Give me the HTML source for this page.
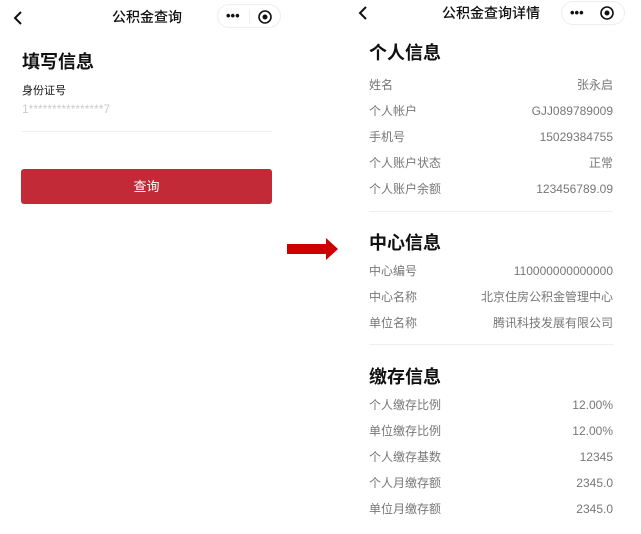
<!DOCTYPE html><html><head><meta charset="utf-8"><style>
*{margin:0;padding:0;box-sizing:border-box}
body{width:641px;height:534px;background:#fff;position:relative;overflow:hidden;font-family:"Liberation Sans","Noto Sans CJK SC",sans-serif;color:#111}
.a{position:absolute;white-space:nowrap}
.t{font-size:14px;font-weight:500;transform:translateX(-50%);line-height:20px}
.cap{position:absolute;height:24px;width:64px;border:1px solid #eee;border-radius:12px}
.h{font-size:18px;font-weight:bold;line-height:24px}
.l,.v{font-size:12px;color:#777;line-height:16px}
.l{left:369px}
.v{right:28px}
.hr{position:absolute;height:1px;background:#eee}
</style></head><body>
<svg class="a" style="left:10px;top:9px" width="16" height="18"><path d="M11 3 L5 9 L11 15" stroke="#111" stroke-width="2" fill="none"/></svg>
<div class="a t" style="left:147px;top:7px">公积金查询</div>
<div class="cap" style="left:217px;top:4px"></div>
<div class="a" style="left:226px;top:8px;font-size:13px;font-weight:bold">•••</div>
<div class="a" style="left:249px;top:9px;width:1px;height:15px;background:#eee"></div>
<svg class="a" style="left:257px;top:9px" width="16" height="16"><circle cx="8" cy="8" r="6" stroke="#111" stroke-width="1.6" fill="none"/><circle cx="8" cy="8" r="2.5" fill="#111"/></svg>
<div class="a h" style="left:22px;top:50px">填写信息</div>
<div class="a" style="left:22px;top:84px;font-size:11px;line-height:14px">身份证号</div>
<div class="a" style="left:22px;top:101px;font-size:12px;color:#ccc;line-height:16px">1****************7</div>
<div class="hr" style="left:22px;top:131px;width:250px"></div>
<div class="a" style="left:21px;top:169px;width:251px;height:35px;background:#c22a38;border-radius:3px;color:#fff;font-size:13px;text-align:center;line-height:35px">查询</div>
<svg class="a" style="left:287px;top:238px" width="52" height="23"><path d="M0 6 H39 V0 L51 11 L39 22 V16 H0Z" fill="#c00"/></svg>
<svg class="a" style="left:355px;top:4px" width="16" height="18"><path d="M11 3 L5 9 L11 15" stroke="#111" stroke-width="2" fill="none"/></svg>
<div class="a t" style="left:491px;top:3px">公积金查询详情</div>
<div class="cap" style="left:561px;top:1px"></div>
<div class="a" style="left:570px;top:5px;font-size:13px;font-weight:bold">•••</div>
<svg class="a" style="left:599px;top:5px" width="16" height="16"><circle cx="8" cy="8" r="6" stroke="#111" stroke-width="1.6" fill="none"/><circle cx="8" cy="8" r="2.5" fill="#111"/></svg>
<div class="a h" style="left:369px;top:41px">个人信息</div>
<div class="a l" style="top:77px">姓名</div><div class="a v" style="top:77px">张永启</div>
<div class="a l" style="top:103px">个人帐户</div><div class="a v" style="top:103px">GJJ089789009</div>
<div class="a l" style="top:129px">手机号</div><div class="a v" style="top:129px">15029384755</div>
<div class="a l" style="top:155px">个人账户状态</div><div class="a v" style="top:155px">正常</div>
<div class="a l" style="top:181px">个人账户余额</div><div class="a v" style="top:181px">123456789.09</div>
<div class="hr" style="left:369px;top:211px;width:244px"></div>
<div class="a h" style="left:369px;top:231px">中心信息</div>
<div class="a l" style="top:263px">中心编号</div><div class="a v" style="top:263px">110000000000000</div>
<div class="a l" style="top:289px">中心名称</div><div class="a v" style="top:289px">北京住房公积金管理中心</div>
<div class="a l" style="top:315px">单位名称</div><div class="a v" style="top:315px">腾讯科技发展有限公司</div>
<div class="hr" style="left:369px;top:344px;width:244px"></div>
<div class="a h" style="left:369px;top:365px">缴存信息</div>
<div class="a l" style="top:397px">个人缴存比例</div><div class="a v" style="top:397px">12.00%</div>
<div class="a l" style="top:423px">单位缴存比例</div><div class="a v" style="top:423px">12.00%</div>
<div class="a l" style="top:449px">个人缴存基数</div><div class="a v" style="top:449px">12345</div>
<div class="a l" style="top:475px">个人月缴存额</div><div class="a v" style="top:475px">2345.0</div>
<div class="a l" style="top:501px">单位月缴存额</div><div class="a v" style="top:501px">2345.0</div>
</body></html>
